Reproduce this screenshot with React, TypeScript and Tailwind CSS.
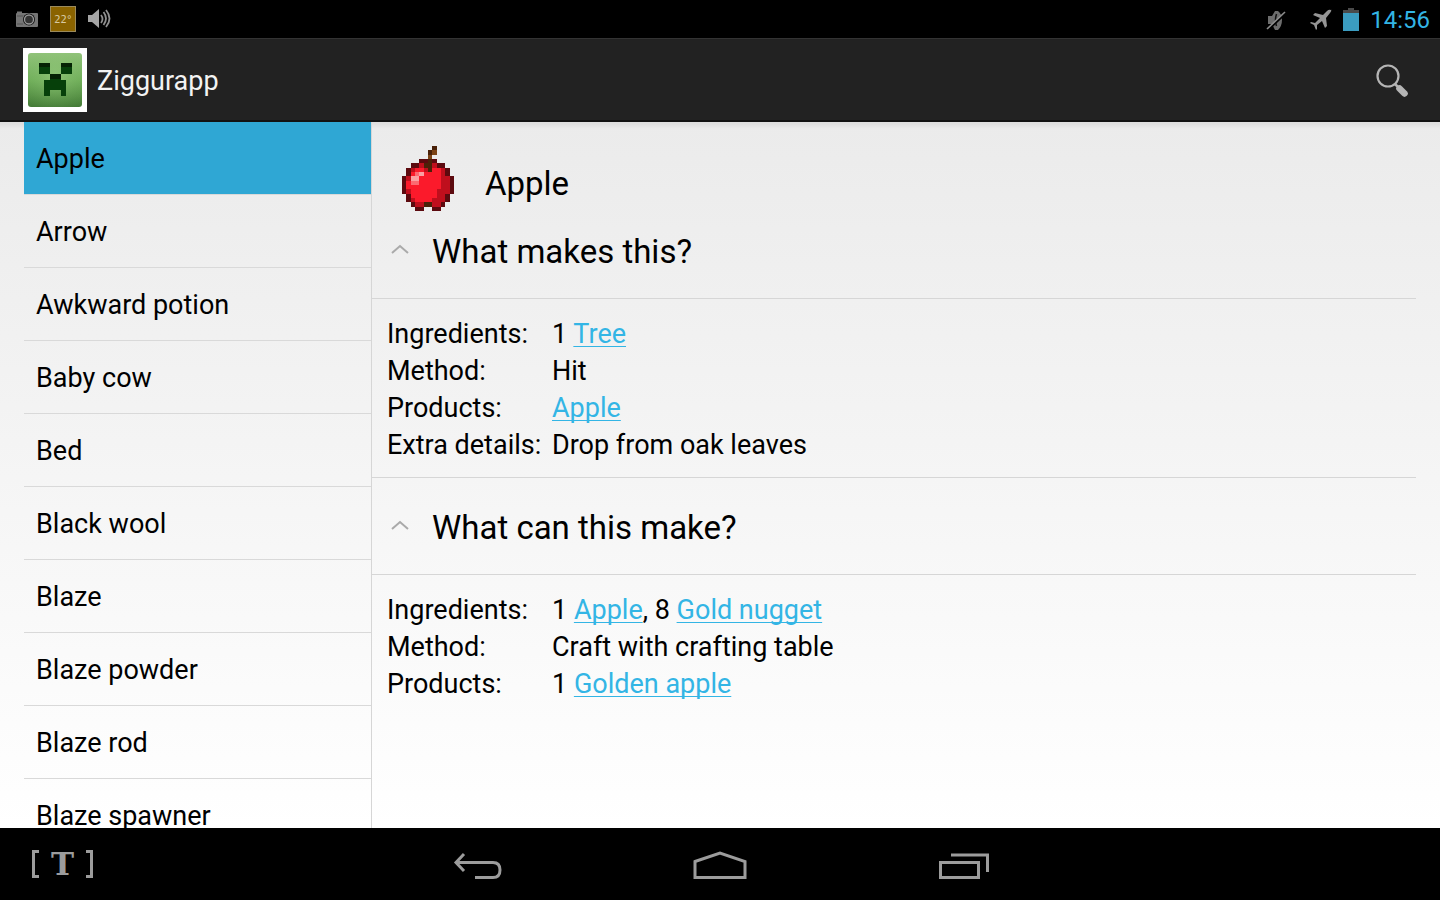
import React, { useState } from 'react';

interface Part {
  text: string;
  link?: boolean;
}

interface Detail {
  label: string;
  value: Part[];
}

interface Section {
  title: string;
  details: Detail[];
}

const items = [
  'Apple',
  'Arrow',
  'Awkward potion',
  'Baby cow',
  'Bed',
  'Black wool',
  'Blaze',
  'Blaze powder',
  'Blaze rod',
  'Blaze spawner',
];

const sections: Section[] = [
  {
    title: 'What makes this?',
    details: [
      { label: 'Ingredients:', value: [{ text: '1 ' }, { text: 'Tree', link: true }] },
      { label: 'Method:', value: [{ text: 'Hit' }] },
      { label: 'Products:', value: [{ text: 'Apple', link: true }] },
      { label: 'Extra details:', value: [{ text: 'Drop from oak leaves' }] },
    ],
  },
  {
    title: 'What can this make?',
    details: [
      {
        label: 'Ingredients:',
        value: [{ text: '1 ' }, { text: 'Apple', link: true }, { text: ', 8 ' }, { text: 'Gold nugget', link: true }],
      },
      { label: 'Method:', value: [{ text: 'Craft with crafting table' }] },
      { label: 'Products:', value: [{ text: '1 ' }, { text: 'Golden apple', link: true }] },
    ],
  },
];

// one letter per pixel, dots are empty
const applePixels = [
  '.......b....',
  '......bB....',
  '......B.....',
  '....DDbD....',
  '..DDCbbCDD..',
  '.DCRRCbRRCD.',
  '.DRPQRRRRCD.',
  'DCQQRRRRRCCD',
  'DRPPRRRRRCCD',
  'DRRRRRRRRCCD',
  'DCRRRRRRCCCD',
  '.DRRRRRRCCD.',
  '.DCRRRRCCCD.',
  '..DCCbbCCD..',
  '...DD..DD...',
];

const appleColors: { [key: string]: string } = {
  b: '#4a2108',
  B: '#7d4416',
  D: '#5c0a0f',
  C: '#bf0f1d',
  R: '#fb1a2b',
  P: '#fb6a72',
  Q: '#fba0a3',
};

const AppleIcon = () => (
  <svg className="h-[65px] w-[52px]" viewBox="0 0 12 15" shapeRendering="crispEdges" aria-hidden="true">
    {applePixels.map((row, y) =>
      row.split('').map((c, x) =>
        c === '.' ? null : <rect key={`${x}-${y}`} x={x} y={y} width="1" height="1" fill={appleColors[c]} />
      )
    )}
  </svg>
);

const CreeperIcon = () => (
  <svg className="size-16" viewBox="0 0 64 64" aria-hidden="true">
    <defs>
      <linearGradient id="skin" x1="0" y1="0" x2="0" y2="1">
        <stop offset="0" stopColor="#93c47c" />
        <stop offset="0.5" stopColor="#6fae59" />
        <stop offset="1" stopColor="#437a36" />
      </linearGradient>
      <radialGradient id="glow" cx="0.5" cy="0.45" r="0.7">
        <stop offset="0" stopColor="#a5d68c" stopOpacity="0.5" />
        <stop offset="1" stopColor="#6fae59" stopOpacity="0" />
      </radialGradient>
    </defs>
    <rect width="64" height="64" fill="#fff" />
    <rect x="5" y="5" width="54" height="54" rx="3" fill="url(#skin)" />
    <rect x="5" y="5" width="54" height="54" rx="3" fill="url(#glow)" />
    <path d="M16 15h11v11H16zM38 15h11v11H38zM27 26h11v6h5v16h-5v-6H27v6h-6V32h6z" fill="#06400a" />
    <path d="M16 15h11v4H16zM38 15h11v4H38zM27 26h11v5H27z" fill="#052204" />
  </svg>
);

const StatusBar = () => (
  <header className="flex h-[38px] shrink-0 items-center bg-black pl-4 pr-[10px] text-[#8c8c8c]">
    <svg className="h-6 w-[22px]" viewBox="0 0 22 24" aria-hidden="true">
      <path d="M1 4.500h5V6h15q1 0 1 1v12q0 1-1 1H1q-1 0-1-1V7q0-1 1-1z" fill="#757575" />
      <path d="M1 9h6M1 17h6" stroke="#555" strokeWidth="1" />
      <circle cx="13" cy="12.500" r="6" fill="#111" />
      <circle cx="13" cy="12.500" r="4.500" fill="#333" stroke="#999" strokeWidth="1.300" />
    </svg>
    <span className="ml-3 flex size-[26px] items-center justify-center border border-[#9b8a5c] bg-[#8a6300] font-['DejaVu_Sans'] text-[10px] text-[#d8c9a0]">
      22°
    </span>
    <svg className="ml-3 h-6 w-6" viewBox="0 0 24 24" fill="none" stroke="#8f8f8f" strokeWidth="1.800" aria-hidden="true">
      <path d="M0 8h4l7-6v19l-7-6H0z" fill="#a5a5a5" stroke="none" />
      <path d="M13 8q3 4 0 8M15.500 5q5 6.500 0 13M18 3q7 8.500 0 17" />
    </svg>
    <div className="ml-auto flex items-center pt-[2px]">
      <svg className="h-6 w-5" viewBox="0 0 20 24" aria-hidden="true">
        <path d="M2 8h4l3-5h3q4 3 4 9t-4 10H9l-3-6H2z" fill="#6d6d6d" />
        <path d="M10.500 6q-2 6 0 12" stroke="#111" strokeWidth="1.500" fill="none" />
        <path d="M1.500 22.500L20 5" stroke="#000" strokeWidth="2" />
        <path d="M1 21L19 4" stroke="#8c8c8c" strokeWidth="1.600" />
      </svg>
      <svg className="ml-6 h-6 w-[22px]" viewBox="0 0 22 24" aria-hidden="true">
        <path
          d="M21 2q-2-1-4 1l-4 4L5 5 3 7l7 3-5 5-4-1-1 1 4 2 2 5 1-1v-4l5-4 3 7 2-2-1-8 4-5q2-2 1-4z"
          fill="#959595"
        />
      </svg>
      <svg className="ml-[11px] h-6 w-4" viewBox="0 0 16 24" aria-hidden="true">
        <path d="M5 0h6v2h5v3H0V2h5z" fill="#4a4a4a" />
        <rect y="5" width="16" height="18" fill="#3b9cc0" />
      </svg>
      <time className="ml-[11px] text-[24px] leading-none text-[#33b5e5]">14:56</time>
    </div>
  </header>
);

const NavBar = () => (
  <nav className="grid h-[72px] shrink-0 grid-cols-[1fr_auto_1fr] items-center bg-black pt-1 text-[#9c9c9c]">
    <button type="button" aria-label="Text input" className="ml-8 flex h-9 w-[61px] items-center justify-between pb-1">
      <span className="h-7 w-[7px] border-[3px] border-r-0 border-[#9c9c9c]" />
      <span className="font-['DejaVu_Serif'] text-[31px] font-bold leading-7">T</span>
      <span className="h-7 w-[7px] border-[3px] border-l-0 border-[#9c9c9c]" />
    </button>
    <div className="flex gap-[190px]">
      <button type="button" aria-label="Back">
        <svg className="h-8 w-[54px]" viewBox="0 0 54 32" fill="none" stroke="currentColor" strokeWidth="3" aria-hidden="true">
          <path d="M8 12.500h36q7 0 7 7.500t-7 7.500H26M15 4l-8 8.500 8 8.500" />
        </svg>
      </button>
      <button type="button" aria-label="Home">
        <svg className="h-8 w-[54px]" viewBox="0 0 54 32" fill="none" stroke="currentColor" strokeWidth="3" aria-hidden="true">
          <path d="M2 11.500L27 3l25 8.500v16H2z" />
        </svg>
      </button>
      <button type="button" aria-label="Recent apps">
        <svg className="h-8 w-[54px]" viewBox="0 0 54 32" fill="none" stroke="currentColor" strokeWidth="3" aria-hidden="true">
          <path d="M3.500 12.500h38v15h-38zM14 5h36.500v17" />
        </svg>
      </button>
    </div>
  </nav>
);

const App: React.FC = () => {
  const [selected, setSelected] = useState('Apple');

  return (
    <div className="flex h-screen flex-col overflow-hidden bg-black font-[Roboto,sans-serif] text-black">
      <StatusBar />
      <div className="flex h-[84px] shrink-0 items-center border-b-2 border-t border-b-[#121212] border-t-[#333] bg-[#222] pl-[23px] pr-[31px]">
        <CreeperIcon />
        <h1 className="ml-[10px] pt-[3px] text-[27px] text-[#f3f3f3]">Ziggurapp</h1>
        <button type="button" aria-label="Search" className="ml-auto pt-[2px]">
          <svg className="size-[34px]" viewBox="0 0 34 34" fill="none" stroke="#b5b5b5" aria-hidden="true">
            <circle cx="13" cy="12" r="10.500" strokeWidth="2.200" />
            <path d="M20 20l4 4" strokeWidth="2.500" />
            <path d="M24.500 24.500l5 5" strokeWidth="6.500" strokeLinecap="round" />
          </svg>
        </button>
      </div>

      <div className="flex min-h-0 flex-1 bg-linear-to-b from-[#ebebeb] to-white px-6 inset-shadow-[0_8px_4px_-4px_#0000000f]">
        <ul className="w-[348px] shrink-0 overflow-hidden border-r border-[#d6d6d6]">
          {items.map((item) => (
            <li key={item} className="border-b border-[#d9d9d9]">
              <button
                type="button"
                onClick={() => setSelected(item)}
                className={`block h-[72px] w-full px-3 pt-[2px] text-left text-[27px] ${selected === item ? 'bg-[#2fa7d4]' : ''}`}
              >
                {item}
              </button>
            </li>
          ))}
        </ul>

        <main className="min-w-0 flex-1 pt-6">
          <div className="flex items-center pl-[30px]">
            <AppleIcon />
            <h2 className="ml-[31px] pt-[10px] text-[33px] leading-10">Apple</h2>
          </div>
          {sections.map((section, i) => (
            <section key={section.title}>
              <h3
                className={`flex items-center border-b border-[#d6d6d6] pb-[26px] pl-[19px] text-[33px] leading-10 ${
                  i === 0 ? 'pt-[21px]' : 'border-t pt-[30px]'
                }`}
              >
                <svg className="mb-1 mr-[23px] h-3 w-[18px]" viewBox="0 0 18 12" fill="none" stroke="#aaa" strokeWidth="2" aria-hidden="true">
                  <path d="M1 9l8-7 8 7" />
                </svg>
                {section.title}
              </h3>
              <dl className="grid grid-cols-[165px_1fr] pb-[13px] pl-[15px] pt-[17px] text-[27px] leading-[37px]">
                {section.details.map((detail) => (
                  <React.Fragment key={detail.label}>
                    <dt className="whitespace-nowrap">{detail.label}</dt>
                    <dd>
                      {detail.value.map((part) =>
                        part.link ? (
                          <a
                            key={part.text}
                            href="#"
                            className="text-[#33b5e5] underline decoration-1 underline-offset-3 [text-decoration-skip-ink:none]"
                          >
                            {part.text}
                          </a>
                        ) : (
                          part.text
                        )
                      )}
                    </dd>
                  </React.Fragment>
                ))}
              </dl>
            </section>
          ))}
        </main>
      </div>
      <NavBar />
    </div>
  );
};

export default App;
